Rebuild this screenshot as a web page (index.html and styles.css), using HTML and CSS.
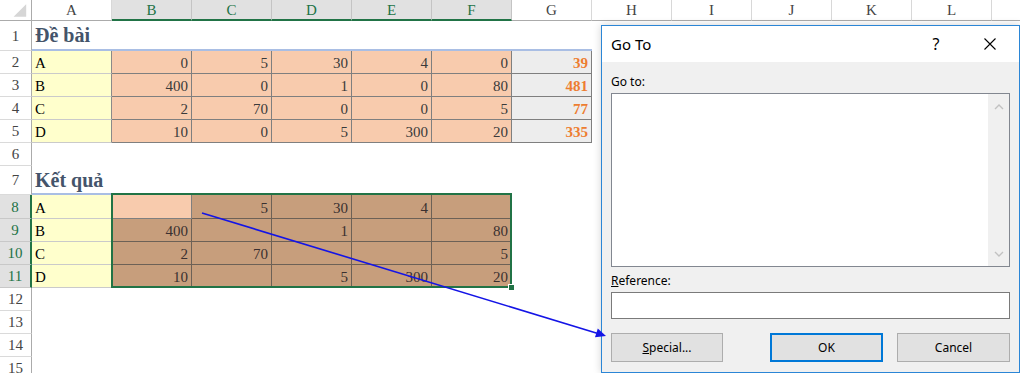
FILE: index.html
```html
<!DOCTYPE html>
<html lang="vi">
<head>
<meta charset="utf-8">
<title>Go To</title>
<link rel="stylesheet" href="styles.css">
</head>
<body>
<div class="sheet">
  <div class="row hdr">
    <div class="corner"><svg width="32" height="20" viewBox="0 0 32 20"><polygon points="27,4 27,17 14,17" fill="#d6d6d6"/></svg></div>
    <div class="ch">A</div>
    <div class="ch on">B</div>
    <div class="ch on">C</div>
    <div class="ch on">D</div>
    <div class="ch on">E</div>
    <div class="ch on">F</div>
    <div class="ch">G</div>
    <div class="ch">H</div>
    <div class="ch">I</div>
    <div class="ch">J</div>
    <div class="ch">K</div>
    <div class="ch">L</div>
    <div class="ch rest"></div>
  </div>

  <div class="row h30">
    <div class="rh">1</div>
    <div class="c ttl bl">Đề bài</div>
    <div class="c bl"></div><div class="c bl"></div><div class="c bl"></div><div class="c bl"></div><div class="c bl"></div><div class="c bl"></div>
    <div class="fill"></div>
  </div>

  <div class="row h23">
    <div class="rh">2</div>
    <div class="c lab">A</div>
    <div class="c num">0</div><div class="c num">5</div><div class="c num">30</div><div class="c num">4</div><div class="c num">0</div>
    <div class="c sum">39</div>
    <div class="fill"></div>
  </div>
  <div class="row h23">
    <div class="rh">3</div>
    <div class="c lab">B</div>
    <div class="c num">400</div><div class="c num">0</div><div class="c num">1</div><div class="c num">0</div><div class="c num">80</div>
    <div class="c sum">481</div>
    <div class="fill"></div>
  </div>
  <div class="row h23">
    <div class="rh">4</div>
    <div class="c lab">C</div>
    <div class="c num">2</div><div class="c num">70</div><div class="c num">0</div><div class="c num">0</div><div class="c num">5</div>
    <div class="c sum">77</div>
    <div class="fill"></div>
  </div>
  <div class="row h23">
    <div class="rh">5</div>
    <div class="c lab">D</div>
    <div class="c num">10</div><div class="c num">0</div><div class="c num">5</div><div class="c num">300</div><div class="c num">20</div>
    <div class="c sum">335</div>
    <div class="fill"></div>
  </div>
  <div class="row h23">
    <div class="rh">6</div>
    <div class="fill"></div>
  </div>
  <div class="row h29">
    <div class="rh">7</div>
    <div class="c ttl ttl2 bl">Kết quả</div>
    <div class="fill"></div>
  </div>

  <div class="row h24">
    <div class="rh on">8</div>
    <div class="c lab">A</div>
    <div class="c num"></div><div class="c brn">5</div><div class="c brn">30</div><div class="c brn">4</div><div class="c brn"></div>
    <div class="fill"></div>
  </div>
  <div class="row h23">
    <div class="rh on">9</div>
    <div class="c lab">B</div>
    <div class="c brn">400</div><div class="c brn"></div><div class="c brn">1</div><div class="c brn"></div><div class="c brn">80</div>
    <div class="fill"></div>
  </div>
  <div class="row h23">
    <div class="rh on">10</div>
    <div class="c lab">C</div>
    <div class="c brn">2</div><div class="c brn">70</div><div class="c brn"></div><div class="c brn"></div><div class="c brn">5</div>
    <div class="fill"></div>
  </div>
  <div class="row h23">
    <div class="rh on">11</div>
    <div class="c lab">D</div>
    <div class="c brn">10</div><div class="c brn"></div><div class="c brn">5</div><div class="c brn">300</div><div class="c brn">20</div>
    <div class="fill"></div>
  </div>
  <div class="row h23"><div class="rh">12</div><div class="fill"></div></div>
  <div class="row h23"><div class="rh">13</div><div class="fill"></div></div>
  <div class="row h23"><div class="rh">14</div><div class="fill"></div></div>
  <div class="row h23"><div class="rh">15</div><div class="fill"></div></div>

  <div class="selection"><div class="handle"></div></div>
</div>

<div class="dlg">
  <div class="dlg-title">
    <span class="dlg-name">Go To</span>
    <span class="help">?</span>
    <span class="close"><svg width="12" height="12" viewBox="0 0 12 12"><path d="M0.5 0.5 L11.5 11.5 M11.5 0.5 L0.5 11.5" stroke="#000" stroke-width="1.1" fill="none"/></svg></span>
  </div>
  <div class="dlg-body">
    <div class="lbl first">Go to:</div>
    <div class="list">
      <div class="scroll">
        <svg width="10" height="6" viewBox="0 0 10 6"><path d="M1 5 L5 1 L9 5" stroke="#c2c2c2" stroke-width="1.4" fill="none"/></svg>
        <svg width="10" height="6" viewBox="0 0 10 6"><path d="M1 1 L5 5 L9 1" stroke="#c2c2c2" stroke-width="1.4" fill="none"/></svg>
      </div>
    </div>
    <div class="lbl ref"><u>R</u>eference:</div>
    <div class="input"></div>
    <div class="btns">
      <div class="btn sp"><u>S</u>pecial...</div>
      <div class="btn ok">OK</div>
      <div class="btn cancel">Cancel</div>
    </div>
  </div>
</div>

<svg class="arrow" width="1020" height="373" viewBox="0 0 1020 373">
  <line x1="202" y1="213" x2="597" y2="333.2" stroke="#1414e6" stroke-width="1.6"/>
  <polygon points="606,336 595,337.3 597.8,328.6" fill="#1414e6"/>
</svg>
</body>
</html>
```

FILE: styles.css
```css
html, body {
  margin: 0;
  padding: 0;
  background: #ffffff;
}
body {
  width: 1020px;
  height: 373px;
  overflow: hidden;
  position: relative;
  font-family: "Liberation Serif", "Times New Roman", serif;
}
.sheet {
  position: relative;
}
.row {
  display: flex;
}
.hdr { height: 21px; }
.h30 { height: 30px; }
.h29 { height: 29px; }
.h24 { height: 24px; }
.h23 { height: 23px; }

.corner {
  width: 32px;
  flex: none;
  box-sizing: border-box;
  border-right: 1px solid #ababab;
  border-bottom: 1px solid #ababab;
  display: flex;
}
.ch {
  width: 80px;
  flex: none;
  box-sizing: border-box;
  border-right: 1px solid #d8d8d8;
  border-bottom: 1px solid #ababab;
  display: flex;
  align-items: center;
  justify-content: center;
  padding-top: 1px;
  font-size: 15px;
  color: #444444;
  background: #ffffff;
}
.ch.on {
  background: #e1e1e1;
  color: #217346;
  border-bottom: 2px solid #217346;
  border-right-color: #c4c4c4;
}
.ch.rest {
  flex: 1;
  border-right: none;
}
.rh {
  width: 32px;
  flex: none;
  box-sizing: border-box;
  border-right: 1px solid #ababab;
  border-bottom: 1px solid #dadada;
  display: flex;
  align-items: center;
  justify-content: center;
  padding-top: 1px;
  font-size: 15px;
  line-height: 17px;
  color: #444444;
  background: #ffffff;
}
.rh.on {
  background: #e1e1e1;
  color: #217346;
  border-right: 2px solid #217346;
  border-bottom-color: #c8c8c8;
}

.c {
  width: 80px;
  flex: none;
  box-sizing: border-box;
  display: flex;
  align-items: flex-end;
  padding: 0 3px 1px 3px;
  font-size: 15px;
  line-height: 17px;
  color: #000000;
  white-space: nowrap;
}
.fill {
  flex: 1;
}
.bl {
  border-bottom: 2px solid #a9bee4;
}
.ttl {
  font-weight: bold;
  font-size: 20px;
  line-height: 23px;
  color: #44546a;
  padding-bottom: 2px;
}
.ttl2 {
  padding-bottom: 1px;
}
.lab {
  background: #ffffcc;
  border-right: 1px solid #8a8a8a;
  border-bottom: 1px solid #cacaca;
}
.num {
  background: #f8cbad;
  border-right: 1px solid #7f7f7f;
  border-bottom: 1px solid #7f7f7f;
  justify-content: flex-end;
  color: #3a3a3a;
}
.sum {
  background: #ededed;
  border-right: 1px solid #7f7f7f;
  border-bottom: 1px solid #7f7f7f;
  justify-content: flex-end;
  font-weight: bold;
  color: #ed7d31;
}
.brn {
  background: #c79e7c;
  border-right: 1px solid #6d6156;
  border-bottom: 1px solid #6d6156;
  justify-content: flex-end;
  color: #3a3030;
}

.selection {
  position: absolute;
  left: 111px;
  top: 193px;
  width: 401px;
  height: 95px;
  box-sizing: border-box;
  border: 2px solid #217346;
}
.handle {
  position: absolute;
  right: -5px;
  bottom: -5px;
  width: 7px;
  height: 7px;
  box-sizing: border-box;
  background: #217346;
  border: 1px solid #ffffff;
}

.dlg {
  position: absolute;
  left: 601px;
  top: 25px;
  width: 419px;
  height: 348px;
  box-sizing: border-box;
  border: 1px solid #2b86d6;
  background: #f0f0f0;
  box-shadow: 0 0 8px rgba(0, 0, 0, 0.18);
  font-family: "Noto Sans", "Open Sans", sans-serif;
  font-size: 12px;
  color: #000000;
  display: flex;
  flex-direction: column;
  z-index: 2;
}
.dlg-title {
  height: 36px;
  flex: none;
  background: #ffffff;
  display: flex;
  align-items: center;
  padding: 0 6px 0 9px;
}
.dlg-name {
  flex: 1;
  font-size: 15px;
}
.help {
  width: 46px;
  text-align: center;
  font-size: 16px;
  margin-right: -3px;
}
.close {
  width: 46px;
  margin-left: 11px;
  display: flex;
  justify-content: center;
}
.dlg-body {
  padding: 0 9px;
  display: flex;
  flex-direction: column;
}
.lbl {
  height: 16px;
  line-height: 16px;
}
.lbl.first {
  margin-top: 12px;
}
.lbl.ref {
  margin-top: 6px;
}
.list {
  margin-top: 3px;
  height: 174px;
  box-sizing: border-box;
  border: 1px solid #828790;
  background: #ffffff;
  display: flex;
  justify-content: flex-end;
}
.scroll {
  width: 21px;
  background: #f0f0f0;
  display: flex;
  flex-direction: column;
  justify-content: space-between;
  align-items: center;
  padding: 10px 0 9px 0;
}
.input {
  margin-top: 3px;
  height: 27px;
  box-sizing: border-box;
  border: 1px solid #7a7a7a;
  background: #ffffff;
}
.btns {
  margin-top: 14px;
  height: 29px;
  display: flex;
}
.btn {
  box-sizing: border-box;
  border: 1px solid #adadad;
  background: #e1e1e1;
  display: flex;
  align-items: center;
  justify-content: center;
}
.sp {
  width: 112px;
}
.ok {
  width: 113px;
  margin-left: 47px;
  border: 2px solid #0078d7;
}
.cancel {
  width: 113px;
  margin-left: 14px;
}

.arrow {
  position: absolute;
  left: 0;
  top: 0;
  z-index: 3;
  pointer-events: none;
}
```
